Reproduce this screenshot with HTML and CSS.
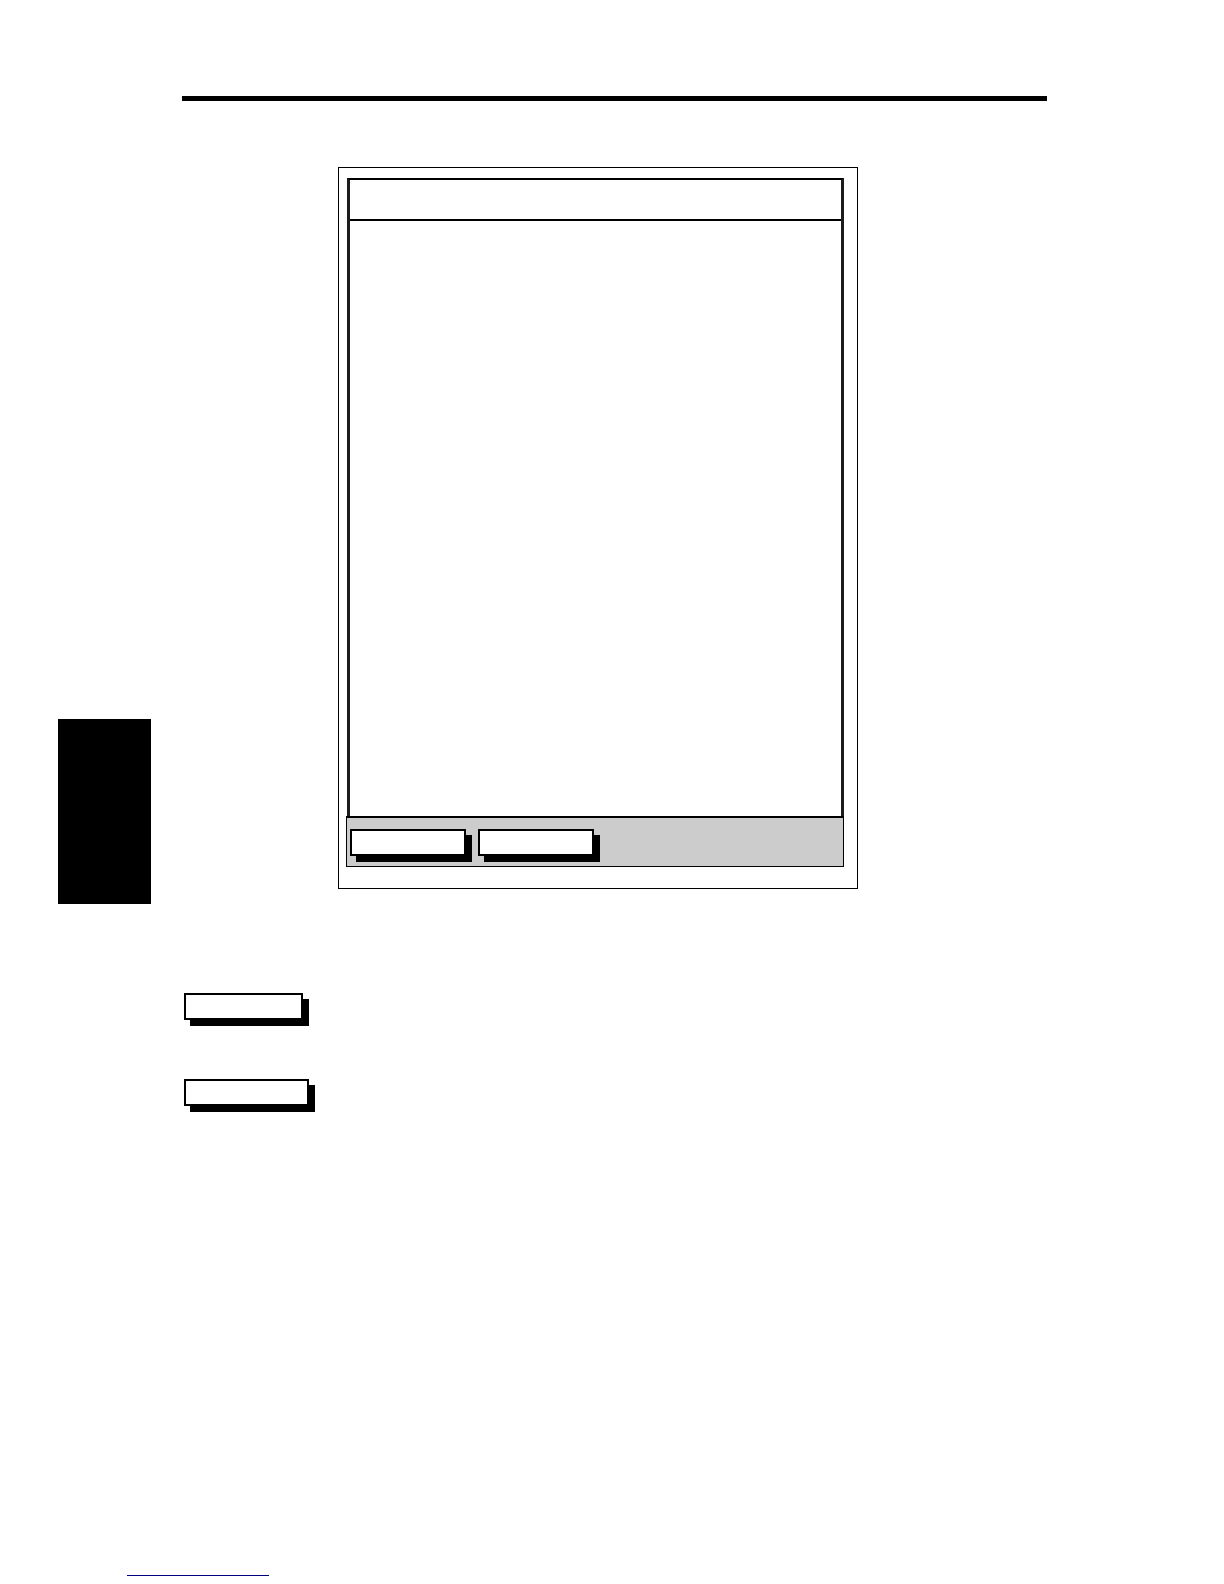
FILE: index.html
```html
<!DOCTYPE html>
<html lang="en">
<head>
  <meta charset="UTF-8">
  <meta name="viewport" content="width=device-width, initial-scale=1">
  <title>Manual Page</title>
  <link rel="stylesheet" href="styles.css">
</head>
<body>

  <div class="page">
    <aside class="chapter-tab"></aside>

    <main class="content">
      <hr class="rule">

      <section class="panel">
        <div class="screen">
          <header class="screen-title"></header>
          <div class="screen-body"></div>
        </div>
        <div class="toolbar">
          <button type="button" class="key" aria-label="First key"></button>
          <button type="button" class="key" aria-label="Second key"></button>
        </div>
      </section>

      <section class="key-list">
        <button type="button" class="key key-medium" aria-label="First key description"></button>
        <button type="button" class="key key-large" aria-label="Second key description"></button>
      </section>
    </main>
  </div>

  <footer class="page-footer">
    <a href="#" class="footer-link" aria-label="Back to top"></a>
  </footer>

</body>
</html>
```

FILE: styles.css
```css
* {
  box-sizing: border-box;
}
body {
  margin: 0;
  min-height: 100vh;
  display: flex;
  flex-direction: column;
  justify-content: space-between;
  background: white;
  font-family: "Liberation Sans", Arial, sans-serif;
}
.page {
  display: grid;
  grid-template-columns: 93px 1fr;
  column-gap: 31px;
  align-items: start;
  padding: 96px 177px 0 58px;
}
.chapter-tab {
  height: 185px;
  margin-top: 623px;
  background: black;
}
.rule {
  height: 5px;
  margin: 0;
  border: none;
  background: black;
}

/* framed screen */
.panel {
  margin: 66px 189px 0 156px;
  padding: 10px 13px 21px 7px;
  border: 1px solid black;
}
.screen {
  margin-left: 1px;
  border: solid #1c1c1c;
  border-width: 2px 3px 0;
  border-top-color: black;
}
.screen-title {
  height: 41px;
  border-bottom: 2px solid black;
}
.screen-body {
  min-height: 595px;
}
.toolbar {
  display: flex;
  gap: 12px;
  padding: 11px 3px 10px;
  border: 1px solid black;
  border-top-width: 2px;
  background: #ccc;
}

/* keys */
.key {
  width: 116px;
  height: 27px;
  padding: 0;
  border: 2px solid black;
  border-radius: 0;
  background: white;
  box-shadow: 6px 6px 0 black;
  cursor: pointer;
}
.key-medium {
  width: 119px;
}
.key-large {
  width: 125px;
}
.key-list {
  display: flex;
  flex-direction: column;
  gap: 59px;
  margin-top: 104px;
  padding-left: 2px;
}

.page-footer {
  padding: 0 127px 8px;
}
.footer-link {
  display: block;
  width: 142px;
  border-bottom: 1px solid #000080;
}
```
